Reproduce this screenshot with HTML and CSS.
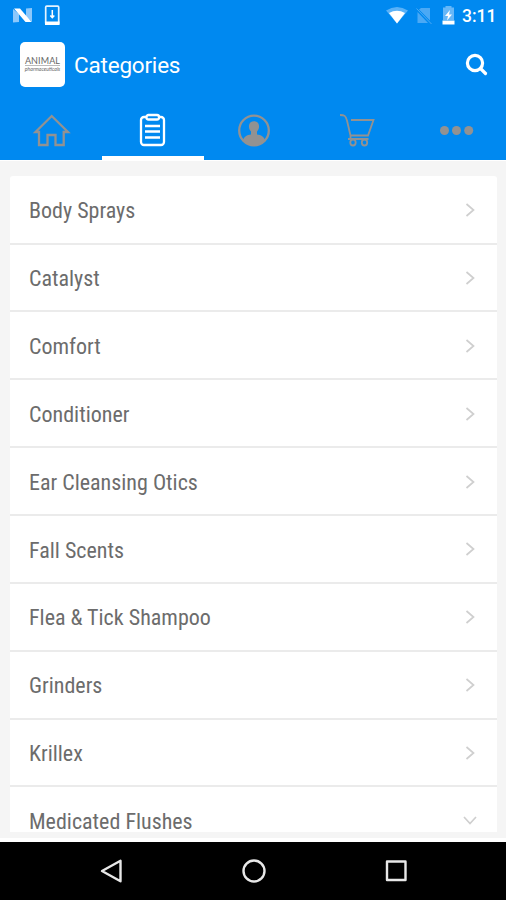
FILE: index.html
```html
<!DOCTYPE html>
<html lang="en">
<head>
<meta charset="utf-8">
<title>Categories</title>
<link rel="stylesheet" href="styles.css">
</head>
<body>
<header class="header">
  <div class="status">
    <svg class="notices" viewBox="0 0 60 32">
      <path d="M13 9 19 14V22L13 22.500zM26 8.500 32 8V22L26 17z" fill="#8cc8fb"/>
      <path d="M14 8.500H20L31.500 22H25.500z" fill="#fff"/>
      <rect x="45.700" y="6.200" width="13" height="18" rx="1" fill="none" stroke="#e4f3ff" stroke-width="1.700"/>
      <path d="M45 21.500H59.500V25H45z" fill="#fff"/>
      <path d="M52.300 10V17M50.300 15.500 52.300 17.700 54.300 15.500" fill="none" stroke="#fff" stroke-width="1.500"/>
    </svg>
    <svg class="signals" viewBox="0 0 72 32">
      <path d="M-1 10.500Q10 3.500 21 10.500L10 23.500z" fill="#59b1f7"/>
      <path d="M2 13Q10 8.500 18 13L10 23.500z" fill="#fff"/>
      <path d="M34 8H43V20.500L32 9.500zM30.500 12 41 23H30.500z" fill="#4ba9f5"/>
      <path d="M29.500 8.500 44.500 24" stroke="#4ba9f5" stroke-width="1"/>
      <path d="M58.500 6H64.500V7.500H67V20H56V7.500H58.500z" fill="#66b7f8"/>
      <path d="M55.500 20.500H67.500V24.500H55.500z" fill="#fff"/>
      <path d="M63 10 58 16H61L60 20.500 65 14.500H62z" fill="#fff"/>
    </svg>
    <span class="clock">3:11</span>
  </div>
  <div class="appbar">
    <div class="logo"><span class="brand">ANIMAL</span><span class="sub">pharmaceuticals</span></div>
    <h1 class="title">Categories</h1>
    <svg class="search" viewBox="0 0 24 24"><circle cx="10" cy="10" r="7.600"/><path d="M15.500 15.500 20.500 20.500"/></svg>
  </div>
  <nav class="tabs">
    <a class="tab"><svg viewBox="0 0 36 36"><path d="M1.500 18 17.700 2 34 18H29.700V31H21.500V21H13.500V31H5V18z"/></svg></a>
    <a class="tab active"><svg viewBox="0 0 36 36"><rect x="6" y="3" width="23" height="28" rx="3"/><rect x="11.500" y="1" width="12.500" height="4.500" rx="2" fill="#0089f0"/><path d="M10 12H25M10 17.500H25M10 23.500H25"/></svg></a>
    <a class="tab"><svg viewBox="0 0 36 36"><circle cx="18" cy="16.500" r="14.800"/><path class="solid" d="M6.500 27C8 22.500 11 21 15 20.500V17.500C13.200 15.500 12.800 13.500 13 11.500C13.300 5.800 22.700 5.800 23 11.500C23.200 13.500 22.800 15.500 21 17.500V20.500C25 21 28 22.500 29.500 27C23 33 13 33 6.500 27z"/></svg></a>
    <a class="tab"><svg viewBox="0 0 36 36"><path class="fine" d="M2 1C6.500 1 7.500 1.500 9 6.500L12.500 21.500H30L35.500 6H13M10 25H30.500M12.500 21.500V25"/><ellipse class="fine" cx="15" cy="28.500" rx="2.700" ry="3"/><ellipse class="fine" cx="26.500" cy="28.500" rx="2.700" ry="3"/></svg></a>
    <a class="tab"><svg viewBox="0 0 36 36"><g class="solid"><circle cx="5.500" cy="16.500" r="4.500"/><circle cx="17.500" cy="16.500" r="4.500"/><circle cx="29.700" cy="16.500" r="4.500"/></g></svg></a>
  </nav>
</header>
<main class="content">
  <ul class="list">
    <li class="row"><span>Body Sprays</span><svg class="chevron" viewBox="0 0 16 16"><path d="M4.500 2 11.500 8 4.500 14"/></svg></li>
    <li class="row"><span>Catalyst</span><svg class="chevron" viewBox="0 0 16 16"><path d="M4.500 2 11.500 8 4.500 14"/></svg></li>
    <li class="row"><span>Comfort</span><svg class="chevron" viewBox="0 0 16 16"><path d="M4.500 2 11.500 8 4.500 14"/></svg></li>
    <li class="row"><span>Conditioner</span><svg class="chevron" viewBox="0 0 16 16"><path d="M4.500 2 11.500 8 4.500 14"/></svg></li>
    <li class="row"><span>Ear Cleansing Otics</span><svg class="chevron" viewBox="0 0 16 16"><path d="M4.500 2 11.500 8 4.500 14"/></svg></li>
    <li class="row"><span>Fall Scents</span><svg class="chevron" viewBox="0 0 16 16"><path d="M4.500 2 11.500 8 4.500 14"/></svg></li>
    <li class="row"><span>Flea &amp; Tick Shampoo</span><svg class="chevron" viewBox="0 0 16 16"><path d="M4.500 2 11.500 8 4.500 14"/></svg></li>
    <li class="row"><span>Grinders</span><svg class="chevron" viewBox="0 0 16 16"><path d="M4.500 2 11.500 8 4.500 14"/></svg></li>
    <li class="row"><span>Krillex</span><svg class="chevron" viewBox="0 0 16 16"><path d="M4.500 2 11.500 8 4.500 14"/></svg></li>
    <li class="row"><span>Medicated Flushes</span><svg class="chevron" viewBox="0 0 16 16"><path d="M2 4 8 10.500 14 4"/></svg></li>
  </ul>
</main>
<footer class="navbar">
  <svg viewBox="0 0 24 24"><path d="M2 12 20.500 1.800V22.200z"/></svg>
  <svg viewBox="0 0 24 24"><circle cx="12" cy="12" r="10.500"/></svg>
  <svg viewBox="0 0 24 24"><rect x="3" y="2.500" width="18.500" height="18.500"/></svg>
</footer>
</body>
</html>
```

FILE: styles.css
```css
* { box-sizing: border-box; }
body {
  margin: 0;
  height: 900px;
  display: flex;
  flex-direction: column;
  overflow: hidden;
  background: #f5f5f5;
  font-family: Roboto, "Liberation Sans", sans-serif;
}
.header { height: 160px; background: #0089f0; flex: none; }
.status { display: flex; height: 32px; color: #fff; }
.notices { width: 60px; height: 32px; }
.signals { width: 72px; height: 32px; margin-left: 327px; overflow: visible; }
.clock { margin-left: 3px; font-size: 17.500px; font-weight: 500; line-height: 32px; }
.appbar { display: flex; align-items: center; height: 66px; padding: 0 17px 0 20px; }
.logo {
  width: 45px;
  height: 45px;
  margin-top: -1px;
  border-radius: 5px;
  background: #fff;
  display: flex;
  flex-direction: column;
  align-items: center;
  justify-content: center;
  color: #666;
}
.brand { font: 9px/9px Lato, sans-serif; letter-spacing: 0.100px; border-bottom: 1px solid #bbb; }
.sub { font: italic 5.200px/7px Lato, sans-serif; }
.title { margin: 0 0 0 9px; font-size: 22.500px; font-weight: 400; color: #fff; letter-spacing: -0.200px; }
.search { width: 24px; height: 24px; margin-left: auto; fill: none; stroke: #fff; stroke-width: 3.200; stroke-linecap: round; }
.tabs { display: grid; grid-template-columns: repeat(5, 101.400px); height: 62px; padding-left: 1px; }
.tab { display: flex; justify-content: center; padding-top: 16px; border-bottom: 4px solid transparent; }
.tab svg { width: 36px; height: 36px; fill: none; stroke: #929292; stroke-width: 2.300; overflow: visible; }
.tab.active { border-color: #fff; }
.tab.active svg { stroke: #fff; }
.tab .solid { fill: #929292; stroke: none; }
.tab .fine { stroke-width: 1.800; }
.content { flex: none; height: 682px; padding: 15px 9px 0 10px; border-top: 1px solid #fff; border-bottom: 4px solid #fff; }
.list { list-style: none; margin: 0; padding: 0.800px 0 0; height: 656px; overflow: hidden; background: #fff; border-radius: 3px 3px 0 0; }
.row {
  display: flex;
  align-items: center;
  justify-content: space-between;
  height: 67.850px;
  padding: 0 19px;
  border-bottom: 2px solid #ebebeb;
  color: #6c6c6c;
  font-size: 22px;
  line-height: 22px;
  font-stretch: 75%;
}
.row span { padding-top: 3.300px; }
.chevron { width: 16px; height: 16px; margin-top: 1px; fill: none; stroke: #cfcfcf; stroke-width: 1.700; }
.navbar { flex: 1; display: flex; justify-content: center; gap: 118px; padding: 17px 0 0 2px; background: #000; }
.navbar svg { width: 24px; height: 24px; fill: none; stroke: #e8e8e8; stroke-width: 2.400; stroke-linejoin: round; }
```
